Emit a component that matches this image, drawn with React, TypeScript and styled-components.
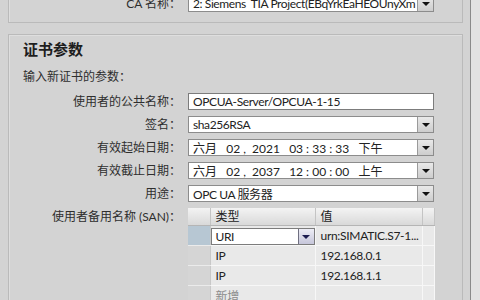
import React from "react";
import styled, { createGlobalStyle } from "styled-components";

const GlobalStyle = createGlobalStyle`
  html, body {
    margin: 0;
    padding: 0;
  }
  body {
    width: 480px;
    height: 300px;
    overflow: hidden;
    background: #d3d3d3;
    font-family: "Lato", "Noto Sans CJK SC", sans-serif;
    font-size: 12px;
    color: #2e2e2e;
  }
`;

const Screen = styled.div`
  display: flex;
  width: 480px;
  height: 300px;
  overflow: hidden;
`;

const Main = styled.div`
  flex: 0 0 470px;
  box-sizing: border-box;
  padding: 0 7px 0 8px;
  display: flex;
  flex-direction: column;
  gap: 11px;
  background: #d3d3d3;
`;

const SideRail = styled.div`
  flex: 1;
  border-left: 1px solid #8a8a8a;
  background: #e2e2e2;
`;

const Panel = styled.section<{ $top?: boolean }>`
  border: 1px solid #bababa;
  box-shadow: inset 1px 1px 0 #dedede;
  margin-top: ${(p) => (p.$top ? "-14px" : "0")};
  padding: ${(p) => (p.$top ? "8px 0 10px" : "5px 0 0")};
`;

const Heading = styled.h3`
  margin: 0 0 0 14px;
  font-size: 15px;
  line-height: 18px;
  font-weight: bold;
  color: #1e1e1e;
`;

const Intro = styled.div`
  margin: 11px 0 8px 14px;
  line-height: 16px;
`;

const FormGrid = styled.div`
  display: grid;
  grid-template-columns: 172px 246px;
  column-gap: 7px;
  row-gap: 6px;
  align-items: center;
`;

const Label = styled.label<{ $alignTop?: boolean }>`
  text-align: right;
  white-space: nowrap;
  line-height: 17px;
  align-self: ${(p) => (p.$alignTop ? "start" : "center")};
`;

const Field = styled.div<{ $plain?: boolean }>`
  height: 17px;
  box-sizing: border-box;
  border: 1px solid ${(p) => (p.$plain ? "#7c7c7c" : "#8c8c8c")};
  background: #fff;
  display: flex;
  align-items: center;
  overflow: hidden;
`;

const FieldText = styled.span<{ $wide?: boolean }>`
  flex: 1;
  padding-left: 4px;
  white-space: pre;
  overflow: hidden;
  letter-spacing: ${(p) => (p.$wide ? "0" : "-0.4px")};
  color: #222;
`;

const DropButton = styled.span<{ $tint?: boolean }>`
  flex: 0 0 15px;
  align-self: stretch;
  border-left: 1px solid ${(p) => (p.$tint ? "#6f6f80" : "#9a9a9a")};
  background: ${(p) =>
    p.$tint
      ? "linear-gradient(#eeeef6, #c6c6da)"
      : "linear-gradient(#e9e9e9, #cdcdcd)"};
  display: flex;
  align-items: center;
  justify-content: center;

  &::after {
    content: "";
    border-left: 4px solid transparent;
    border-right: 4px solid transparent;
    border-top: 4px solid ${(p) => (p.$tint ? "#1d1d50" : "#111")};
  }
`;

const SanTable = styled.table`
  border-collapse: collapse;
  table-layout: fixed;
  width: 246px;
  align-self: start;
`;

const HeadCell = styled.th`
  height: 17px;
  padding: 0 0 0 5px;
  text-align: left;
  font-weight: normal;
  color: #222;
  background: linear-gradient(#f3f3f3, #d9d9d9);
  border-right: 1px solid #c4c4c4;
  border-bottom: 1px solid #b5b5b5;
  line-height: 15px;
`;

const RowHead = styled.td<{ $active?: boolean }>`
  height: 19px;
  padding: 0;
  background: ${(p) => (p.$active ? "#b7c7d3" : "#d5d5d5")};
  border-bottom: 1px solid #ebebeb;
  border-right: 1px solid #c8c8c8;
`;

const Cell = styled.td<{ $muted?: boolean }>`
  height: 19px;
  padding: 0 0 0 5px;
  background: #e9e9e9;
  border-bottom: 1px solid #f7f7f7;
  border-right: 1px solid #f7f7f7;
  white-space: nowrap;
  overflow: hidden;
  letter-spacing: -0.3px;
  color: ${(p) => (p.$muted ? "#8c8c8c" : "#222")};
`;

const EditCell = styled.td`
  padding: 2px 0 0 0;
  height: 17px;
  background: #e9e9e9;
  border-bottom: 1px solid #f7f7f7;
  border-right: 1px solid #f7f7f7;
`;

const fields = [
  { label: "使用者的公共名称：", value: "OPCUA-Server/OPCUA-1-15", drop: false },
  { label: "签名：", value: "sha256RSA", drop: true },
  { label: "有效起始日期：", value: "六月   02 ,  2021   03 : 33 : 33   下午", drop: true, wide: true },
  { label: "有效截止日期：", value: "六月   02 ,  2037   12 : 00 : 00   上午", drop: true, wide: true },
  { label: "用途：", value: "OPC UA 服务器", drop: true },
];

const sanRows = [
  { type: "IP", value: "192.168.0.1" },
  { type: "IP", value: "192.168.1.1" },
];

export default function App() {
  return (
    <>
      <GlobalStyle />
      <Screen>
        <Main>
          <Panel $top>
            <FormGrid>
              <Label>CA 名称：</Label>
              <Field>
                <FieldText>2: Siemens  TIA Project(EBqYrkEaHEOUnyXm</FieldText>
                <DropButton />
              </Field>
            </FormGrid>
          </Panel>

          <Panel>
            <Heading>证书参数</Heading>
            <Intro>输入新证书的参数：</Intro>
            <FormGrid>
              {fields.map((f) => (
                <React.Fragment key={f.label}>
                  <Label>{f.label}</Label>
                  <Field $plain={!f.drop}>
                    <FieldText $wide={f.wide}>{f.value}</FieldText>
                    {f.drop && <DropButton />}
                  </Field>
                </React.Fragment>
              ))}

              <Label $alignTop>使用者备用名称 (SAN)：</Label>
              <SanTable>
                <colgroup>
                  <col style={{ width: 22 }} />
                  <col style={{ width: 105 }} />
                  <col style={{ width: 107 }} />
                  <col style={{ width: 12 }} />
                </colgroup>
                <thead>
                  <tr>
                    <HeadCell />
                    <HeadCell>类型</HeadCell>
                    <HeadCell>值</HeadCell>
                    <HeadCell />
                  </tr>
                </thead>
                <tbody>
                  <tr>
                    <RowHead $active />
                    <EditCell>
                      <Field $plain>
                        <FieldText>URI</FieldText>
                        <DropButton $tint />
                      </Field>
                    </EditCell>
                    <Cell>urn:SIMATIC.S7-1...</Cell>
                    <Cell />
                  </tr>
                  {sanRows.map((r) => (
                    <tr key={r.value}>
                      <RowHead />
                      <Cell>{r.type}</Cell>
                      <Cell>{r.value}</Cell>
                      <Cell />
                    </tr>
                  ))}
                  <tr>
                    <RowHead />
                    <Cell $muted>新增</Cell>
                    <Cell />
                    <Cell />
                  </tr>
                </tbody>
              </SanTable>
            </FormGrid>
          </Panel>
        </Main>
        <SideRail />
      </Screen>
    </>
  );
}
